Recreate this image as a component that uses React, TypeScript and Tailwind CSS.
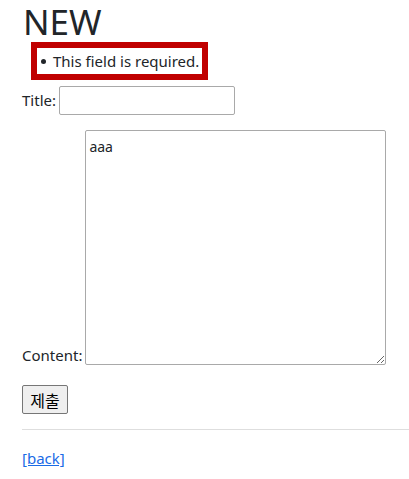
export default function App() {
  return (
    <div className="min-h-screen bg-white pl-[22px] text-[#212529] font-['Noto_Sans','Noto_Sans_CJK_KR',sans-serif]">
      <h1 className="m-0 pl-[1px] pt-[2px] text-[35px] font-normal leading-[40px]">NEW</h1>

      <ul className="ml-[9px] w-fit border-[6px] border-[#c00000] py-[1px] pl-[4px] pr-[3px] text-[15px] leading-[24px]">
        <li className="flex items-center">
          <span className="mr-[7px] h-[5px] w-[5px] rounded-full bg-[#212529]" />
          <span>This field is required.</span>
        </li>
      </ul>

      <div className="mt-[6px] flex items-center gap-[3px] text-[15px]">
        <label htmlFor="title">Title:</label>
        <input
          id="title"
          type="text"
          className="h-[29px] w-[176px] rounded-[2px] border border-[#a9a9a9] bg-white px-[3px] text-[14px] outline-none"
        />
      </div>

      <div className="mt-[15px] flex items-end gap-[3px] text-[15px]">
        <label htmlFor="content" className="leading-[20px]">Content:</label>
        <textarea
          id="content"
          defaultValue="aaa"
          className="h-[235px] w-[301px] resize-y rounded-[2px] border border-[#a9a9a9] bg-white px-[3px] pt-[7px] text-[14px] leading-[18px] outline-none"
        />
      </div>

      <button
        type="button"
        className="mt-[20px] block h-[29px] w-[46px] rounded-[2px] border border-[#767676] bg-[#efefef] text-[16px] leading-none text-black font-['Noto_Sans_CJK_KR',sans-serif]"
      >
        제출
      </button>

      <hr className="mt-[15px] border-0 border-t border-[#dedede]" />

      <div className="mt-[16px] text-[15px] leading-[24px]">
        <a href="#" className="text-[#1a6be6] underline">[back]</a>
      </div>
    </div>
  );
}
